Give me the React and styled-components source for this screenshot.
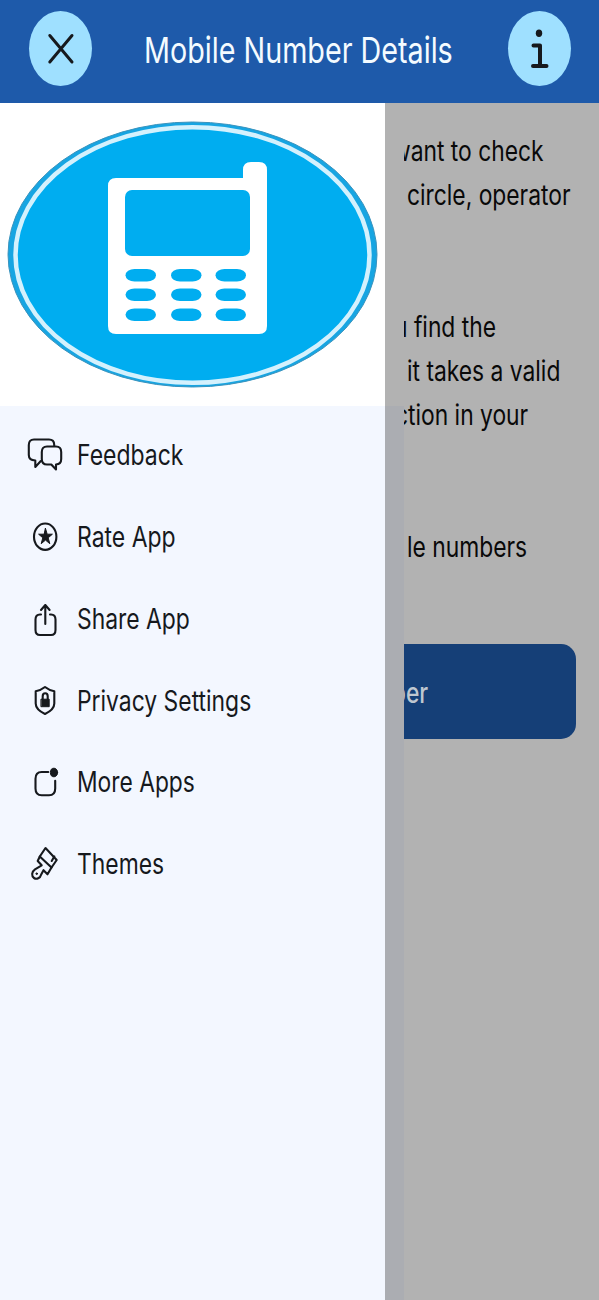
import React from "react";
import styled, { createGlobalStyle } from "styled-components";

const menu = [
  { label: "Feedback", icon: "chat", fit: 0.82 },
  { label: "Rate App", icon: "star", fit: 0.82 },
  { label: "Share App", icon: "share", fit: 0.817 },
  { label: "Privacy Settings", icon: "shield", fit: 0.817 },
  { label: "More Apps", icon: "badge", fit: 0.814 },
  { label: "Themes", icon: "brush", fit: 0.817 },
];

const lines = [
  { text: "want to check", shift: -12 },
  { text: "circle, operator", shift: 2.5 },
  { text: "" },
  { text: "" },
  { text: "u find the", shift: -10 },
  { text: "it takes a valid", shift: 2.5 },
  { text: "ction in your", shift: -9.5 },
  { text: "" },
  { text: "" },
  { text: "le numbers", shift: 2.5 },
];

const icons = {
  chat: (
    <>
      <path d="M22 11.500h9q5.200 0 5.200 5.500v7q0 5.300-5.200 5.500v5L26.300 29.500H22q-5.200 0-5.200-5.500v-7q0-5.500 5.200-5.500z" />
      <path d="M29.200 10.500V9.800q0-5.300-5.200-5.300H9q-5.200 0-5.200 5.500v10q0 5.300 6.500 5.500V32l5.500-6" />
    </>
  ),
  star: (
    <>
      <ellipse cx="20.200" cy="19.700" rx="11.200" ry="13.200" />
      <path
        className="solid"
        d="M20.500 11.500l1.700 5.700h5.200l-4.200 3.600 1.600 5.900-4.300-3.600-4.300 3.600 1.600-5.900-4.200-3.600h5.200z"
      />
    </>
  ),
  share: (
    <>
      <path d="M16 15.500h-1q-4.500 0-4.500 5v10.500q0 5 4.500 5h11q4.500 0 4.500-5V20.500q0-5-4.500-5h-1" />
      <path d="M20.300 25V6M16 11l4.300-5 4.300 5" />
    </>
  ),
  shield: (
    <>
      <path d="M20 6q4 3.200 9.300 4.200v12.300q0 6-9.300 10.500-9.300-4.500-9.300-10.500V10.200Q16 9.200 20 6z" />
      <path className="solid" d="M16.300 18.200h7.900v7.500h-7.900z" />
      <path d="M17.700 18v-2.800q0-3 2.500-3t2.500 3V18" />
    </>
  ),
  badge: (
    <>
      <path d="M23.300 10h-6.600q-6.200 0-6.200 6.800v9.700q0 6.800 6.200 6.800h7.300q6.200 0 6.200-6.800v-7.700" />
      <ellipse className="solid" cx="29" cy="10.500" rx="3.600" ry="4.300" />
    </>
  ),
  brush: (
    <>
      <path d="M20.500 4L31.700 16l-5.200 7.500L14.800 12.500z" />
      <path d="M14.800 12.500L12.700 17l4 4.300-6.700 4c-3.600 2.500-3.600 7-1 8.700s6.200.3 7.200-3.500l2.300-4.300 4 4.100 4-6.800" />
      <path d="M29.300 12.500l-2.600 4.500" />
      <circle className="solid" cx="11.700" cy="29.700" r=".8" />
    </>
  ),
};

const App = () => {
  return (
    <Screen>
      <GlobalStyle />
      <Header>
        <RoundButton aria-label="Close">
          <svg width="63" height="75" viewBox="0 0 63 75">
            <path d="M20.800 24.500L43 51M43 24.500L20.800 51" />
          </svg>
        </RoundButton>
        <Title>
          <Fit $x={0.798}>Mobile Number Details</Fit>
        </Title>
        <RoundButton aria-label="Info" $bold>
          <svg width="63" height="75" viewBox="0 0 63 75">
            <ellipse className="dot" cx="31" cy="22.300" rx="3.200" ry="3.700" />
            <path d="M25.500 34.500H32V55M25 55h13.500" />
          </svg>
        </RoundButton>
      </Header>
      <Body>
        <Drawer>
          <Banner>
            <svg width="385" height="303" viewBox="0 103 385 303">
              <ellipse
                cx="192.500"
                cy="254.500"
                rx="184.500"
                ry="132.500"
                fill="#17a5e2"
                stroke="#3a93bd"
              />
              <ellipse
                cx="192.500"
                cy="255"
                rx="177"
                ry="127.800"
                fill="#00adf0"
                stroke="#d4f1fd"
                strokeWidth="4.500"
              />
              <path
                fill="#fff"
                d="M115 178H243V170q0-8 8-8h8q8 0 8 8V326q0 8-8 8H116q-8 0-8-8V186q0-8 8-8z"
              />
              <rect x="125" y="190" width="125" height="66" rx="7" fill="#00adf0" />
              {[269, 288.5, 308.5].map((y) =>
                [125.5, 171, 215.5].map((x) => (
                  <rect
                    key={`${x}-${y}`}
                    x={x}
                    y={y}
                    width="30.500"
                    height="12.500"
                    rx="9"
                    ry="6.200"
                    fill="#00adf0"
                  />
                ))
              )}
            </svg>
          </Banner>
          <Menu>
            {menu.map((item) => (
              <MenuItem key={item.label}>
                <Icon viewBox="0 0 40 40">{icons[item.icon]}</Icon>
                <Fit $x={item.fit}>{item.label}</Fit>
              </MenuItem>
            ))}
          </Menu>
        </Drawer>
        <Edge />
        <Page>
          {lines.map((line, i) => (
            <Line key={i} $shift={line.shift}>
              <Fit $x={0.815}>{line.text}</Fit>
            </Line>
          ))}
          <SearchButton>
            <Fit $x={0.815}>ber</Fit>
          </SearchButton>
        </Page>
      </Body>
    </Screen>
  );
};

export default App;

const GlobalStyle = createGlobalStyle`
  body {
    margin: 0;
  }
`;

const Screen = styled.div`
  width: 599px;
  height: 1300px;
  overflow: hidden;
  display: flex;
  flex-direction: column;
  font-family: Inter, "Liberation Sans", sans-serif;
  font-size: 28px;
  color: #16191d;
`;

const Header = styled.header`
  height: 102.6px;
  flex-shrink: 0;
  box-sizing: border-box;
  padding: 11px 28.5px 0;
  display: flex;
  align-items: flex-start;
  background-color: #1e5aaa;
`;

const RoundButton = styled.button`
  width: 63px;
  height: 75px;
  flex-shrink: 0;
  padding: 0;
  border: none;
  border-radius: 50%;
  background-color: #9fe0ff;

  svg {
    display: block;
    fill: none;
    stroke: #16191d;
    stroke-width: ${(props) => (props.$bold ? 4 : 3)};
    stroke-linecap: round;
    stroke-linejoin: round;
  }

  .dot {
    fill: #16191d;
    stroke: none;
  }
`;

const Title = styled.h1`
  width: 416px;
  flex-shrink: 0;
  box-sizing: border-box;
  margin: 0;
  padding-left: 52px;
  font-size: 36px;
  font-weight: 400;
  line-height: 78px;
  color: #f4fbff;
`;

const Fit = styled.span`
  display: inline-block;
  white-space: nowrap;
  transform: scaleX(${(props) => props.$x});
  transform-origin: left center;
`;

const Body = styled.div`
  flex: 1;
  display: grid;
  grid-template-columns: 385px 19px 195px;
`;

const Drawer = styled.aside`
  background-color: #f3f7ff;
`;

const Banner = styled.div`
  height: 303.4px;
  background-color: #fff;

  svg {
    display: block;
  }
`;

const Menu = styled.nav`
  display: flex;
  flex-direction: column;
  padding: 8.4px 0 0 25px;
`;

const MenuItem = styled.div`
  height: 81.8px;
  display: flex;
  align-items: center;
  gap: 12px;
`;

const Icon = styled.svg`
  width: 40px;
  height: 40px;
  flex-shrink: 0;
  fill: none;
  stroke: #16191d;
  stroke-width: 2.1;
  stroke-linecap: round;
  stroke-linejoin: round;

  .solid {
    fill: #16191d;
    stroke-width: 1;
  }
`;

const Edge = styled.div`
  background: linear-gradient(#b2b2b2 303px, #abadb2 303px);
`;

const Page = styled.main`
  overflow: hidden;
  padding-top: 26px;
  background-color: #b2b2b2;
  color: #090909;
`;

const Line = styled.div`
  height: 44px;
  line-height: 44px;
  margin-left: ${(props) => props.$shift || 0}px;
`;

const SearchButton = styled.div`
  width: 172px;
  height: 95px;
  box-sizing: border-box;
  margin-top: 75.4px;
  padding-top: 3px;
  display: flex;
  align-items: center;
  border-radius: 0 15px 15px 0;
  background-color: #153f77;
  color: #bfc7d0;
  font-weight: 500;
  text-indent: -15px;
`;
